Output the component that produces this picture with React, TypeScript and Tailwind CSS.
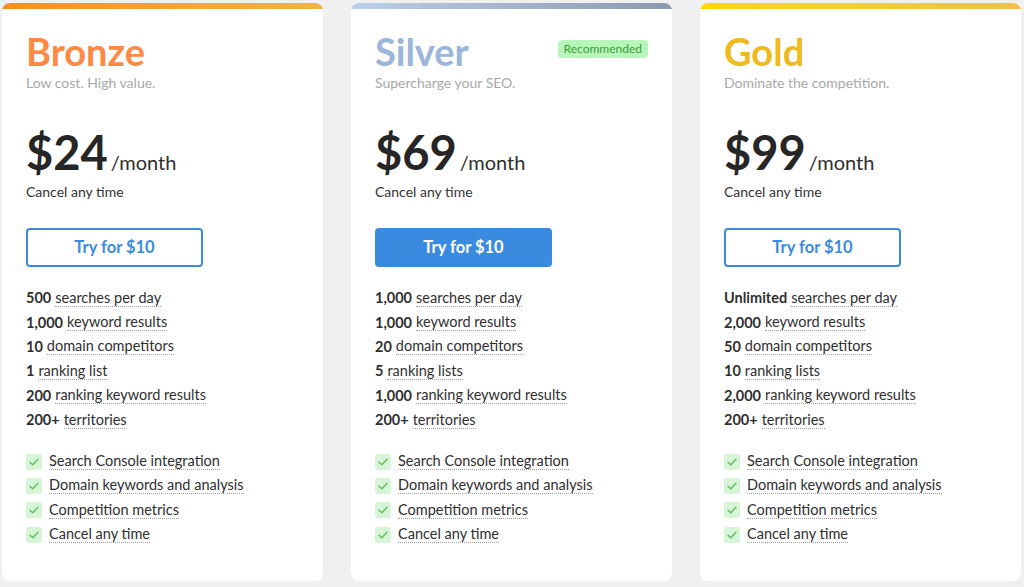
import React from "react";

interface Plan {
  name: string;
  tagline: string;
  price: string;
  titleColor: string;
  bar: string;
  recommended?: boolean;
  filled?: boolean;
  limits: [string, string][];
}

const plans: Plan[] = [
  {
    name: "Bronze",
    tagline: "Low cost. High value.",
    price: "$24",
    titleColor: "text-[#ff8a45]",
    bar: "bg-gradient-to-r from-[#ff8c1a] to-[#f0b440]",
    limits: [
      ["500", "searches per day"],
      ["1,000", "keyword results"],
      ["10", "domain competitors"],
      ["1", "ranking list"],
      ["200", "ranking keyword results"],
      ["200+", "territories"],
    ],
  },
  {
    name: "Silver",
    tagline: "Supercharge your SEO.",
    price: "$69",
    titleColor: "text-[#9bb6da]",
    bar: "bg-gradient-to-r from-[#bccfea] to-[#8b9aae]",
    recommended: true,
    filled: true,
    limits: [
      ["1,000", "searches per day"],
      ["1,000", "keyword results"],
      ["20", "domain competitors"],
      ["5", "ranking lists"],
      ["1,000", "ranking keyword results"],
      ["200+", "territories"],
    ],
  },
  {
    name: "Gold",
    tagline: "Dominate the competition.",
    price: "$99",
    titleColor: "text-[#f0b91e]",
    bar: "bg-gradient-to-r from-[#ffd500] to-[#f0c048]",
    limits: [
      ["Unlimited", "searches per day"],
      ["2,000", "keyword results"],
      ["50", "domain competitors"],
      ["10", "ranking lists"],
      ["2,000", "ranking keyword results"],
      ["200+", "territories"],
    ],
  },
];

const extras = [
  "Search Console integration",
  "Domain keywords and analysis",
  "Competition metrics",
  "Cancel any time",
];

function Check() {
  return (
    <span className="flex h-[16px] w-[16px] shrink-0 items-center justify-center rounded-[3px] bg-[#d6f4d6]">
      <svg width="10" height="8" viewBox="0 0 10 8" fill="none">
        <path d="M1 4.2 L3.8 6.8 L9 1.2" stroke="#5fbf5f" strokeWidth="1.4" strokeLinecap="round" strokeLinejoin="round" />
      </svg>
    </span>
  );
}

function PlanCard({ plan }: { plan: Plan }) {
  return (
    <div className="flex h-[578px] w-[321px] shrink-0 flex-col overflow-hidden rounded-[8px] bg-white">
      <div className={`h-[6px] w-full ${plan.bar}`} />
      <div className="flex flex-col px-[24px]">
        {/* Header */}
        <div className="mt-[22px] flex items-start justify-between">
          <h2 className={`text-[38px] font-bold leading-[40px] ${plan.titleColor}`}>{plan.name}</h2>
          {plan.recommended && (
            <span className="mt-[9px] rounded-[4px] bg-[#b8f5b8] px-[6px] py-[2px] text-[12px] leading-[14px] text-[#3a9e3a]">
              Recommended
            </span>
          )}
        </div>
        <p className="mt-[4px] text-[14px] leading-[16px] text-[#a9a9a9]">{plan.tagline}</p>

        {/* Price */}
        <div className="mt-[36px] flex items-baseline">
          <span className="text-[47px] font-bold leading-[50px] text-[#262626]">{plan.price}</span>
          <span className="ml-[3px] text-[20px] text-[#2e2e2e]">/month</span>
        </div>
        <p className="mt-[7px] text-[14px] leading-[16px] text-[#333]">Cancel any time</p>

        <button
          className={`mt-[28px] h-[39px] w-[177px] rounded-[4px] border-2 border-[#3a8be0] text-[16.5px] font-bold ${
            plan.filled ? "bg-[#3a8be0] text-white" : "bg-white text-[#3a8be0]"
          }`}
        >
          Try for $10
        </button>

        {/* Limits */}
        <ul className="mt-[19px] flex flex-col">
          {plan.limits.map(([num, label]) => (
            <li key={label} className="flex h-[24.4px] items-center text-[14.5px] text-[#2f2f2f]">
              <span className="font-bold">{num}</span>
              <span className="ml-[4px] border-b border-dotted border-[#a0a0a0] leading-[16px]">{label}</span>
            </li>
          ))}
        </ul>

        {/* Extras */}
        <ul className="mt-[17px] flex flex-col">
          {extras.map((e) => (
            <li key={e} className="flex h-[24.4px] items-center gap-[7px] text-[14.5px] text-[#2f2f2f]">
              <Check />
              <span className="border-b border-dotted border-[#a0a0a0] leading-[16px]">{e}</span>
            </li>
          ))}
        </ul>
      </div>
    </div>
  );
}

export default function App() {
  return (
    <div className="h-[587px] w-[1024px] overflow-hidden bg-[#f0f0f0] font-['Lato',sans-serif]">
      <div className="flex gap-[28px] pl-[2px] pt-[3px]">
        {plans.map((p) => (
          <PlanCard key={p.name} plan={p} />
        ))}
      </div>
    </div>
  );
}
